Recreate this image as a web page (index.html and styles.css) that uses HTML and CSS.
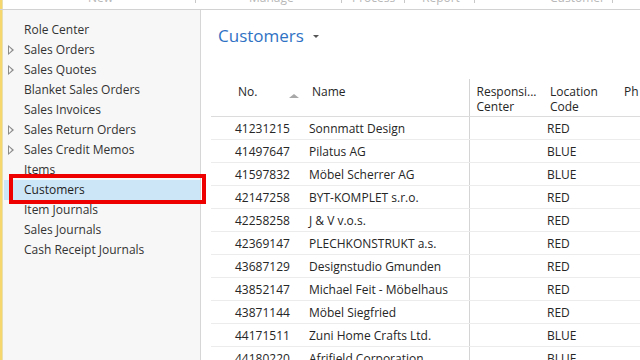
FILE: index.html
```html
<!DOCTYPE html>
<html lang="en">
<head>
    <meta charset="UTF-8">
    <title>Customers</title>
    <link rel="stylesheet" href="styles.css">
</head>
<body>
    <div class="ribbon">
        <span class="tab tab-new">New</span>
        <span class="sep s1"></span>
        <span class="tab tab-manage">Manage</span>
        <span class="sep s2"></span>
        <span class="tab tab-process">Process</span>
        <span class="sep s3"></span>
        <span class="tab tab-report">Report</span>
        <span class="sep s4"></span>
        <span class="tab tab-customer">Customer</span>
        <span class="sep s5"></span>
    </div>

    <div class="layout">
        <div class="accent"></div>

        <nav class="nav">
            <div class="nav-item">Role Center</div>
            <div class="nav-item has-children">Sales Orders</div>
            <div class="nav-item has-children">Sales Quotes</div>
            <div class="nav-item">Blanket Sales Orders</div>
            <div class="nav-item">Sales Invoices</div>
            <div class="nav-item has-children">Sales Return Orders</div>
            <div class="nav-item has-children">Sales Credit Memos</div>
            <div class="nav-item">Items</div>
            <div class="nav-item active">Customers</div>
            <div class="nav-item">Item Journals</div>
            <div class="nav-item">Sales Journals</div>
            <div class="nav-item">Cash Receipt Journals</div>
        </nav>

        <main class="content">
            <h1 class="page-title">Customers <span class="caret"></span></h1>

            <table class="grid">
                <thead>
                    <tr>
                        <th class="col-no">No. <span class="sort"></span></th>
                        <th class="col-name">Name</th>
                        <th class="col-resp">Responsi...<br>Center</th>
                        <th class="col-loc">Location<br>Code</th>
                        <th class="col-ph">Ph</th>
                    </tr>
                </thead>
                <tbody>
                    <tr><td>41231215</td><td>Sonnmatt Design</td><td class="col-resp"></td><td>RED</td><td></td></tr>
                    <tr><td>41497647</td><td>Pilatus AG</td><td class="col-resp"></td><td>BLUE</td><td></td></tr>
                    <tr><td>41597832</td><td>Möbel Scherrer AG</td><td class="col-resp"></td><td>BLUE</td><td></td></tr>
                    <tr><td>42147258</td><td>BYT-KOMPLET s.r.o.</td><td class="col-resp"></td><td>RED</td><td></td></tr>
                    <tr><td>42258258</td><td>J &amp; V v.o.s.</td><td class="col-resp"></td><td>RED</td><td></td></tr>
                    <tr><td>42369147</td><td>PLECHKONSTRUKT a.s.</td><td class="col-resp"></td><td>RED</td><td></td></tr>
                    <tr><td>43687129</td><td>Designstudio Gmunden</td><td class="col-resp"></td><td>RED</td><td></td></tr>
                    <tr><td>43852147</td><td>Michael Feit - Möbelhaus</td><td class="col-resp"></td><td>RED</td><td></td></tr>
                    <tr><td>43871144</td><td>Möbel Siegfried</td><td class="col-resp"></td><td>RED</td><td></td></tr>
                    <tr><td>44171511</td><td>Zuni Home Crafts Ltd.</td><td class="col-resp"></td><td>BLUE</td><td></td></tr>
                    <tr><td>44180220</td><td>Afrifield Corporation</td><td class="col-resp"></td><td>BLUE</td><td></td></tr>
                </tbody>
            </table>
        </main>
    </div>
</body>
</html>
```

FILE: styles.css
```css
* {
    margin: 0;
    padding: 0;
    box-sizing: border-box;
}

html, body {
    width: 640px;
    height: 360px;
    overflow: hidden;
}

body {
    font-family: 'Open Sans', 'Noto Sans', sans-serif;
    font-size: 12px;
    color: #262626;
    background-color: white;
    display: flex;
    flex-direction: column;
}

/* Ribbon (only the bottom of its labels is visible) */
.ribbon {
    height: 10px;
    border-bottom: 1px solid #d2d2d2;
    position: relative;
    overflow: hidden;
    flex-shrink: 0;
}

.tab {
    position: absolute;
    top: -11px;
    font-size: 12px;
    color: #b8b8b8;
}

.tab-new { left: 88px; }
.tab-manage { left: 249px; }
.tab-process { left: 352px; }
.tab-report { left: 422px; }
.tab-customer { left: 550px; }

.sep {
    position: absolute;
    top: 0;
    width: 1px;
    height: 3px;
    background-color: #c8c8c8;
}

.s1 { left: 195px; }
.s2 { left: 341px; }
.s3 { left: 404px; }
.s4 { left: 474px; }
.s5 { left: 612px; }

.layout {
    flex: 1;
    display: flex;
    min-height: 0;
}

.accent {
    width: 3px;
    background-color: #f5d76e;
    margin-top: -11px;
    border-right: 1px solid #e8e0b0;
}

/* Left navigation */
.nav {
    width: 198px;
    background-color: #f7f7f7;
    border-right: 1px solid #d6d6d6;
    padding: 10px 0 0 1px;
}

.nav-item {
    height: 20px;
    line-height: 20px;
    padding-left: 20px;
    color: #333;
    position: relative;
    white-space: nowrap;
}

/* hollow expander triangle */
.nav-item.has-children::before {
    content: "";
    position: absolute;
    left: 4px;
    top: 5px;
    border-left: 6px solid #8a8a8a;
    border-top: 5px solid transparent;
    border-bottom: 5px solid transparent;
}

.nav-item.has-children::after {
    content: "";
    position: absolute;
    left: 5px;
    top: 7px;
    border-left: 3px solid #f7f7f7;
    border-top: 3px solid transparent;
    border-bottom: 3px solid transparent;
}

.nav-item.active {
    background-color: #cde6f7;
    color: #1e1e1e;
}

.nav-item.active::after {
    content: "";
    position: absolute;
    left: 5px;
    right: -6px;
    top: -6px;
    bottom: -4px;
    border: 4px solid #ee0000;
}

/* Content */
.content {
    flex: 1;
    padding: 14px 0 0 10px;
    overflow: hidden;
}

.page-title {
    font-family: 'Open Sans', 'Noto Sans', sans-serif;
    font-size: 17px;
    font-weight: normal;
    color: #2f72c4;
    padding-left: 7px;
    height: 55px;
}

.caret {
    display: inline-block;
    margin-left: 5px;
    vertical-align: 4px;
    border-top: 3px solid #555;
    border-left: 3px solid transparent;
    border-right: 3px solid transparent;
}

.grid {
    border-collapse: collapse;
    table-layout: fixed;
    width: 460px;
}

.grid th {
    font-weight: normal;
    text-align: left;
    vertical-align: top;
    height: 37px;
    padding: 5px 0 0 0;
    line-height: 15px;
    border-bottom: 1px solid #dcdcdc;
    color: #262626;
}

.grid td {
    height: 23px;
    padding-top: 1px;
    border-bottom: 1px solid #ececec;
    white-space: nowrap;
    overflow: hidden;
    line-height: 21px;
}

.grid td:first-child { padding-left: 24px; width: 94px; }
.grid td:nth-child(2) { padding-left: 4px; width: 164px; }
.grid td:nth-child(4) { padding-left: 4px; width: 75px; }
.grid td:nth-child(5) { padding-left: 6px; }

.grid th.col-no { padding-left: 27px; width: 94px; position: relative; }
.grid th.col-name { padding-left: 7px; width: 164px; }
.grid th.col-loc { padding-left: 7px; width: 75px; }
.grid th.col-ph { padding-left: 6px; }

.grid .col-resp {
    width: 74px;
    padding-left: 6px;
    border-left: 1px solid #d4d4d4;
}

.grid th.col-resp { padding-left: 7px; }

.sort {
    position: absolute;
    left: 78px;
    top: 15px;
    border-bottom: 4px solid #a8a8a8;
    border-left: 5px solid transparent;
    border-right: 5px solid transparent;
}
```
